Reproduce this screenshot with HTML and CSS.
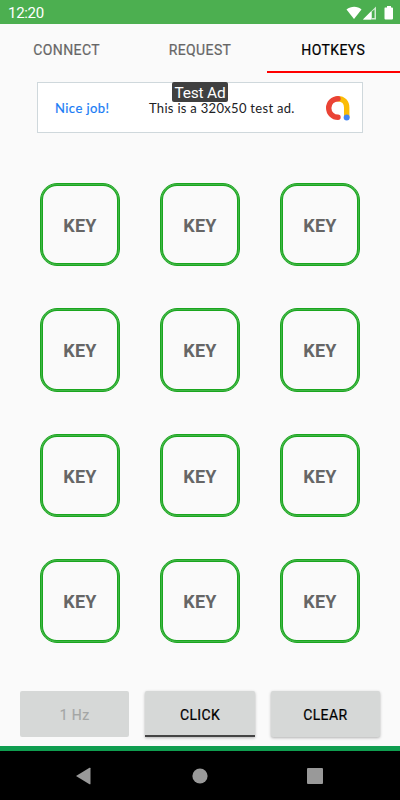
FILE: index.html
```html
<!DOCTYPE html>
<html lang="en">
<head>
    <meta charset="UTF-8">
    <meta name="viewport" content="width=device-width, initial-scale=1.0">
    <title>Hotkeys</title>
    <link rel="stylesheet" href="styles.css">
</head>
<body>
    <div class="status-bar">
        <span class="clock">12:20</span>
        <svg class="status-icons" width="48" height="16" viewBox="0 0 48 16">
            <path d="M0.5 4.500 C5 0.7 11.500 0.7 15.500 4.500 L8 14 Z" fill="#fff"/>
            <path d="M17 14.500 L30 1.500 V14.500 Z" fill="#fff" fill-opacity="0.75"/>
            <path d="M17 14.500 L25 6.500 V14.500 Z" fill="#fff"/>
            <path d="M26 6.500 L28.500 4.500 V13 H26 Z" fill="#4caf50"/>
            <path d="M39 2.500 H41 V1 H45 V2.500 H46 Q47 2.500 47 3.500 V13.500 Q47 14.500 46 14.500 H39.500 Q38.500 14.500 38.500 13.500 V3.500 Q38.500 2.500 39 2.500 Z" fill="#fff"/>
        </svg>
    </div>

    <div class="tabs">
        <div class="tab">CONNECT</div>
        <div class="tab">REQUEST</div>
        <div class="tab active">HOTKEYS</div>
    </div>

    <div class="ad">
        <span class="ad-title">Nice job!</span>
        <span class="ad-text">This is a 320x50 test ad.</span>
        <svg class="ad-logo" width="26" height="26" viewBox="0 0 26 26" fill="none" stroke-width="5.400" stroke-linecap="round">
            <path d="M13 3.700 C18.500 3.700 21.700 7.500 21.700 12.500 V21.500" stroke="#fbbc04"/>
            <path d="M13 3.700 A9.300 9.300 0 0 0 13 22.300" stroke="#ea4335"/>
            <circle cx="21.700" cy="22.500" r="3" fill="#4285f4"/>
        </svg>
        <span class="ad-badge">Test Ad</span>
    </div>

    <div class="keys">
        <div class="key">KEY</div>
        <div class="key">KEY</div>
        <div class="key">KEY</div>
        <div class="key">KEY</div>
        <div class="key">KEY</div>
        <div class="key">KEY</div>
        <div class="key">KEY</div>
        <div class="key">KEY</div>
        <div class="key">KEY</div>
        <div class="key">KEY</div>
        <div class="key">KEY</div>
        <div class="key">KEY</div>
    </div>

    <div class="actions">
        <button type="button" class="btn" disabled>1 Hz</button>
        <button type="button" class="btn selected">CLICK</button>
        <button type="button" class="btn">CLEAR</button>
    </div>

    <div class="nav-bar">
        <svg width="16" height="18" viewBox="0 0 16 18"><path d="M0 9 L13.500 0.800 Q14.500 0.300 14.500 1.300 V16.700 Q14.500 17.700 13.500 17.200 Z" fill="#999"/></svg>
        <svg width="16" height="16" viewBox="0 0 16 16"><circle cx="8" cy="8" r="7.600" fill="#999"/></svg>
        <svg width="16" height="16" viewBox="0 0 16 16"><rect width="16" height="16" rx="1" fill="#999"/></svg>
    </div>
</body>
</html>
```

FILE: styles.css
```css
* {
    box-sizing: border-box;
}

body {
    margin: 0;
    width: 400px;
    height: 800px;
    display: flex;
    flex-direction: column;
    background-color: #fafafa;
    font-family: Roboto, sans-serif;
    overflow: hidden;
}

.status-bar {
    height: 24px;
    padding: 1px 6px 0 8px;
    display: flex;
    justify-content: space-between;
    align-items: center;
    background-color: #4caf50;
    color: #fff;
}

.clock {
    font-size: 15px;
    letter-spacing: -0.3px;
}

.tabs {
    height: 49px;
    display: grid;
    grid-template-columns: repeat(3, 1fr);
}

.tab {
    padding-top: 4px;
    display: flex;
    justify-content: center;
    align-items: center;
    border-bottom: 2px solid transparent;
    color: #666;
    font-size: 14px;
    letter-spacing: 0.4px;
    -webkit-text-stroke: 0.2px;
}

.tab.active {
    color: #000;
    border-bottom-color: #f00;
}

.ad {
    position: relative;
    width: 326px;
    height: 51px;
    margin: 9px auto 0 37px;
    padding: 0 11px 0 17px;
    display: flex;
    align-items: center;
    background-color: #fff;
    border: 1px solid #cfd8dc;
    font-family: Lato, sans-serif;
    font-size: 13px;
    line-height: 10px;
}

.ad-title {
    width: 94px;
    color: #1a7cf5;
    letter-spacing: 0.45px;
    -webkit-text-stroke: 0.2px;
}

.ad-text {
    color: #202124;
    letter-spacing: 0.3px;
    white-space: nowrap;
}

.ad-logo {
    margin-left: auto;
}

.ad-badge {
    position: absolute;
    top: -1px;
    left: 134px;
    width: 56px;
    height: 20px;
    border-radius: 2px;
    background-color: #404040;
    color: #fff;
    font-family: Roboto, sans-serif;
    font-size: 15.500px;
    letter-spacing: -0.2px;
    line-height: 22px;
    text-align: center;
}

.keys {
    margin: 49.500px 40px 0;
    display: grid;
    grid-template-columns: repeat(3, 80px);
    grid-auto-rows: 83.500px;
    gap: 42px 40px;
}

.key {
    display: flex;
    justify-content: center;
    align-items: center;
    padding-top: 2px;
    border: 1px solid #1aa61e;
    border-radius: 17px;
    box-shadow: inset 0 0 0 1px #40b546, inset 0 0 0 2px #1aa61e;
    color: #666;
    font-size: 18px;
    font-weight: bold;
    letter-spacing: 0.2px;
}

.actions {
    margin: auto 20px 9px;
    display: grid;
    grid-template-columns: repeat(3, 1fr);
    gap: 16px;
}

.btn {
    height: 46px;
    padding: 2px 0 0;
    border: none;
    border-radius: 2px;
    background-color: #d6d8d7;
    box-shadow: 0 1px 3px rgba(0, 0, 0, 0.3);
    color: #000;
    font-family: Roboto, sans-serif;
    font-size: 14px;
    letter-spacing: 0.35px;
    -webkit-text-stroke: 0.2px;
}

.btn:disabled {
    box-shadow: none;
    color: #a4a6a5;
}

.btn.selected {
    padding-top: 4px;
    border-bottom: 2px solid #444;
    border-radius: 2px 2px 0 0;
}

.nav-bar {
    height: 54px;
    padding: 0 77px 0 76px;
    display: flex;
    justify-content: space-between;
    align-items: center;
    border-top: 5px solid #0f9d4f;
    background-color: #000;
}
```
